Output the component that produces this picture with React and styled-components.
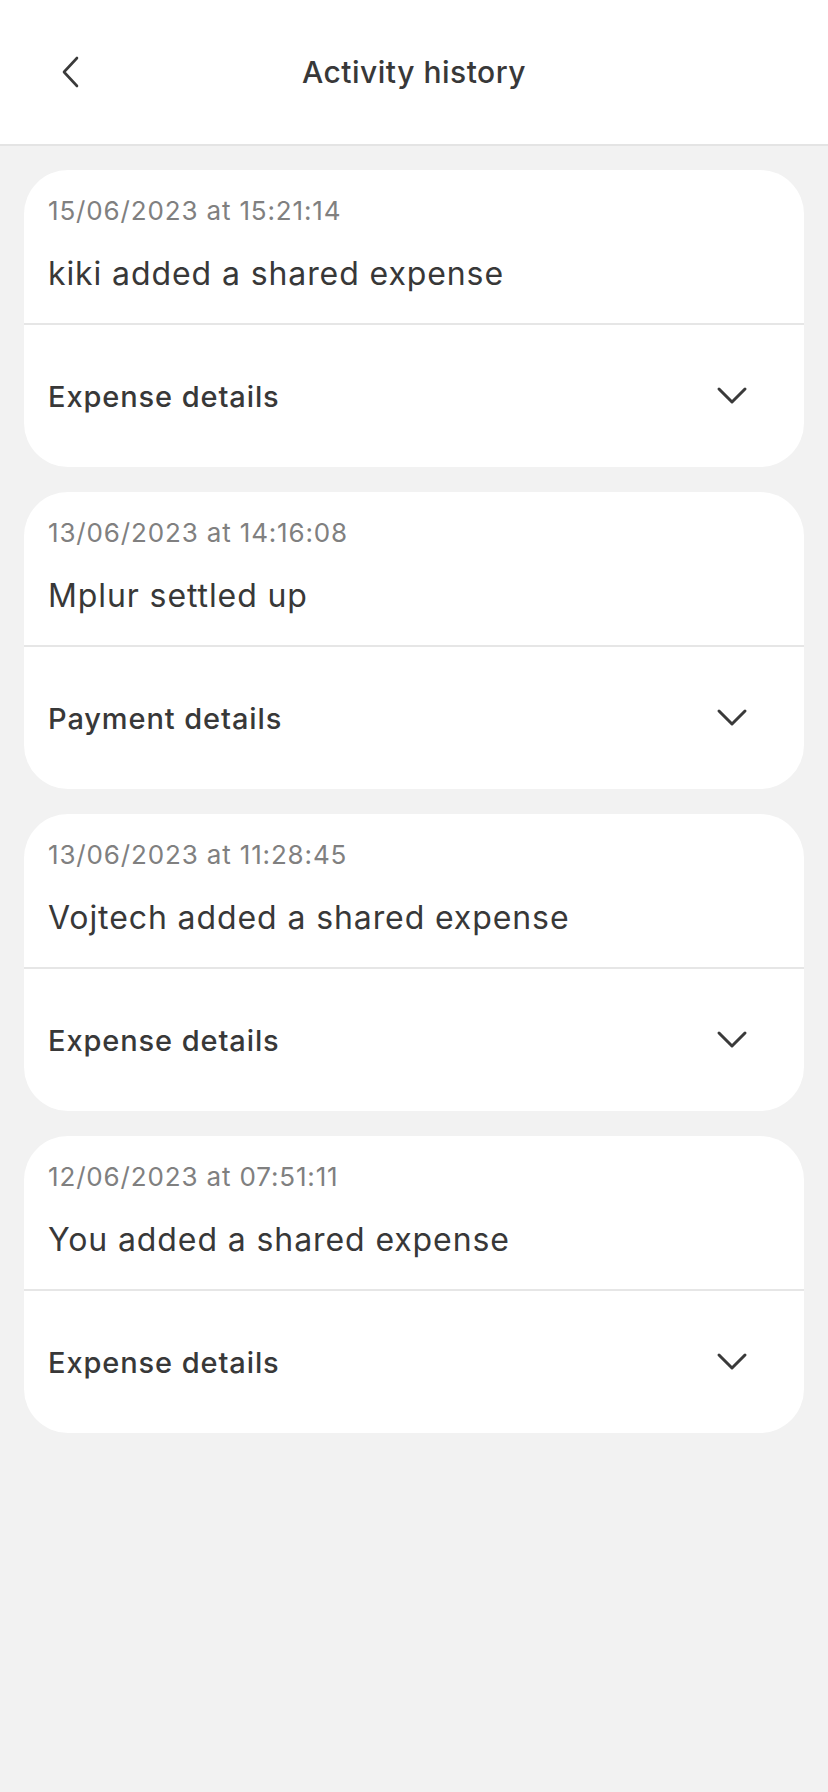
import styled, { createGlobalStyle } from "styled-components";

const GlobalStyle = createGlobalStyle`
  html, body {
    margin: 0;
    padding: 0;
    background: #f2f2f2;
    font-family: Inter, "Noto Sans", sans-serif;
  }
`;

const activities = [
  { date: "15/06/2023 at 15:21:14", text: "kiki added a shared expense", details: "Expense details" },
  { date: "13/06/2023 at 14:16:08", text: "Mplur settled up", details: "Payment details" },
  { date: "13/06/2023 at 11:28:45", text: "Vojtech added a shared expense", details: "Expense details" },
  { date: "12/06/2023 at 07:51:11", text: "You added a shared expense", details: "Expense details" },
];

const BackIcon = () => (
  <svg width="20" height="32" viewBox="0 0 20 32" fill="none">
    <path d="M17 2 L4 16 L17 30" stroke="#3a3a3a" strokeWidth="2.6" strokeLinecap="round" strokeLinejoin="round" />
  </svg>
);

const ChevronDown = () => (
  <svg width="32" height="20" viewBox="0 0 32 20" fill="none">
    <path d="M3 3 L16 16 L29 3" stroke="#3a3a3a" strokeWidth="3" strokeLinecap="round" strokeLinejoin="round" />
  </svg>
);

const App = () => {
  return (
    <>
      <GlobalStyle />
      <Page>
        <Header>
          <BackButton>
            <BackIcon />
          </BackButton>
          <Title>Activity history</Title>
        </Header>

        <List>
          {activities.map((item, i) => (
            <Card key={i}>
              <Summary>
                <DateText>{item.date}</DateText>
                <Message>{item.text}</Message>
              </Summary>
              <DetailsRow>
                <DetailsLabel>{item.details}</DetailsLabel>
                <ChevronDown />
              </DetailsRow>
            </Card>
          ))}
        </List>
      </Page>
    </>
  );
};

export default App;

const Page = styled.div`
  min-height: 1792px;
  background: #f2f2f2;
`;

const Header = styled.header`
  height: 146px;
  background: #ffffff;
  border-bottom: 2px solid #e4e4e4;
  display: flex;
  align-items: center;
  justify-content: center;
  position: relative;
  box-sizing: border-box;
`;

const BackButton = styled.div`
  position: absolute;
  left: 60px;
  top: 56px;
  display: flex;
`;

const Title = styled.h1`
  margin: 0;
  font-size: 30px;
  font-weight: 500;
  letter-spacing: 0.5px;
  color: #383838;
`;

const List = styled.div`
  padding: 24px 24px;
  display: flex;
  flex-direction: column;
  gap: 25px;
`;

const Card = styled.div`
  background: #ffffff;
  border-radius: 44px;
  overflow: hidden;
`;

const Summary = styled.div`
  padding: 22px 24px 27px;
  border-bottom: 2px solid #e6e6e6;
  display: flex;
  flex-direction: column;
  gap: 22px;
`;

const DateText = styled.div`
  font-size: 26px;
  line-height: 38px;
  letter-spacing: 0.85px;
  color: #808080;
`;

const Message = styled.div`
  font-size: 32px;
  line-height: 44px;
  letter-spacing: 0.9px;
  color: #383838;
`;

const DetailsRow = styled.div`
  height: 142px;
  padding: 0 56px 0 24px;
  display: flex;
  align-items: center;
  justify-content: space-between;
`;

const DetailsLabel = styled.div`
  font-size: 29px;
  font-weight: 500;
  letter-spacing: 0.9px;
  color: #383838;
`;
